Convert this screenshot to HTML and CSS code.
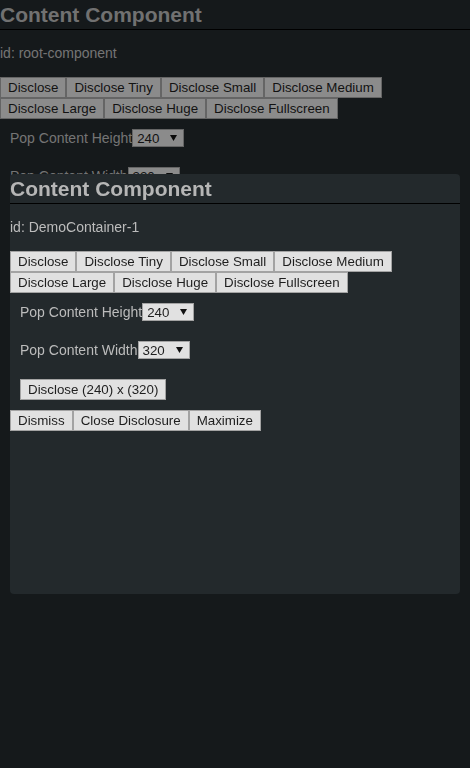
FILE: index.html
```html
<!DOCTYPE html>
<html>
<head>
<meta charset="utf-8">
<link rel="stylesheet" href="styles.css">
</head>
<body>
<div class="component">
  <h2 class="title">Content Component</h2>
  <p class="cid">id: root-component</p>
  <div class="btns"><button>Disclose</button><button>Disclose Tiny</button><button>Disclose Small</button><button>Disclose Medium</button><button>Disclose Large</button><button>Disclose Huge</button><button>Disclose Fullscreen</button></div>
  <div class="field"><label>Pop Content Height</label><select><option>240</option></select></div>
  <div class="field"><label>Pop Content Width</label><select><option>320</option></select></div>
  <div class="action"><button>Disclose (240) x (320)</button></div>
</div>
<div class="overlay"></div>
<div class="popup">
  <div class="component">
    <h2 class="title">Content Component</h2>
    <p class="cid">id: DemoContainer-1</p>
    <div class="btns"><button>Disclose</button><button>Disclose Tiny</button><button>Disclose Small</button><button>Disclose Medium</button><button>Disclose Large</button><button>Disclose Huge</button><button>Disclose Fullscreen</button></div>
    <div class="field"><label>Pop Content Height</label><select><option>240</option></select></div>
    <div class="field"><label>Pop Content Width</label><select><option>320</option></select></div>
    <div class="action"><button>Disclose (240) x (320)</button></div>
    <div class="btns"><button>Dismiss</button><button>Close Disclosure</button><button>Maximize</button></div>
  </div>
</div>
</body>
</html>
```
FILE: styles.css
```css
html, body {
  margin: 0;
  padding: 0;
  background: #23292c;
  font-family: "Liberation Sans", Arial, sans-serif;
  color: #b9b9b9;
  height: 100%;
}
.component {
  display: flex;
  flex-direction: column;
  align-items: flex-start;
}
.title {
  align-self: stretch;
  margin: 0;
  padding: 3px 0 2px 0;
  font-size: 21px;
  line-height: 24px;
  font-weight: bold;
  color: #b6b6b6;
  border-bottom: 1px solid #000;
}
.cid {
  margin: 16px 0 16px;
  font-size: 14px;
  line-height: 15px;
  color: #bcbcbc;
}
.btns {
  display: flex;
  flex-wrap: wrap;
  max-width: 400px;
}
button {
  font-family: "Liberation Sans", Arial, sans-serif;
  font-size: 13.333px;
  line-height: 15px;
  padding: 2px 7px;
  margin: 0;
  color: #1e1e1e;
  background: #e1e1e1;
  border: 1px solid #a3a3a3;
  border-radius: 0;
}
.field {
  display: flex;
  align-items: center;
  padding: 10px;
  font-size: 14px;
  color: #bcbcbc;
}
select {
  appearance: none;
  -webkit-appearance: none;
  width: 52px;
  height: 18px;
  margin: 0;
  padding: 0 0 0 4px;
  font-family: "Liberation Sans", Arial, sans-serif;
  font-size: 13.333px;
  color: #1e1e1e;
  background: #e1e1e1 url("data:image/svg+xml;utf8,<svg xmlns='http://www.w3.org/2000/svg' width='7' height='6'><path d='M0 0H7L3.5 6Z' fill='%23111'/></svg>") no-repeat right 6px center;
  border: 1px solid #a3a3a3;
  border-radius: 0;
}
.action {
  padding: 10px;
}
.overlay {
  position: fixed;
  inset: 0;
  background: rgba(0, 0, 0, 0.38);
}
.popup {
  position: absolute;
  left: 10px;
  top: 174px;
  width: 450px;
  height: 420px;
  background: #23292c;
  border-radius: 4px;
  overflow: hidden;
}
```
